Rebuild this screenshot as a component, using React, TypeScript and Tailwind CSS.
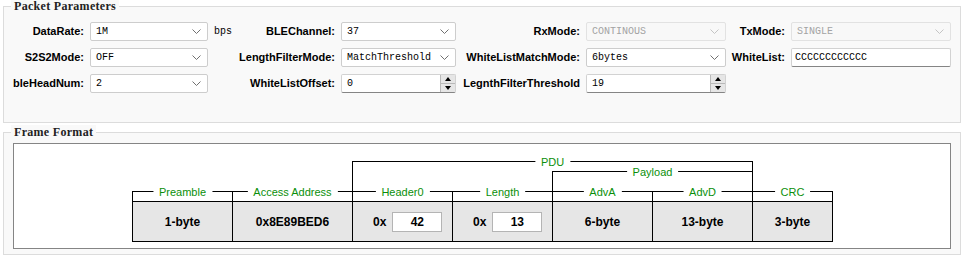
import { ReactNode } from 'react';
import clsx from 'clsx';

// small "v" arrow used by the combo boxes
function Chevron({ disabled }: { disabled?: boolean }) {
  return (
    <svg width="9" height="5" viewBox="0 0 9 5" className="shrink-0">
      <polyline
        points="0.5,0.5 4.5,4.5 8.5,0.5"
        fill="none"
        stroke={disabled ? '#c4c4c4' : '#707070'}
        strokeWidth="1"
      />
    </svg>
  );
}

function Combo({ value, disabled }: { value: string; disabled?: boolean }) {
  return (
    <div
      className={clsx(
        'flex h-[19px] items-center justify-between rounded-[2px] border pl-[5px] pr-[6px]',
        disabled ? 'border-[#e2e2e2] bg-[#f8f8f8] text-[#a3a3a3]' : 'border-[#cdcdcd] bg-white text-black'
      )}
    >
      <span className="font-['Liberation_Mono',monospace] text-[10px] leading-none">{value}</span>
      <Chevron disabled={disabled} />
    </div>
  );
}

function LineEdit({ value }: { value: string }) {
  return (
    <div className="flex h-[19px] items-center rounded-[2px] border border-[#d2d2d2] border-b-[#858585] bg-white pl-[3px]">
      <span className="font-['Liberation_Mono',monospace] text-[10px] leading-none text-black">{value}</span>
    </div>
  );
}

function SpinBox({ value }: { value: string }) {
  return (
    <div className="flex h-[19px] items-stretch rounded-[2px] border border-[#d2d2d2] border-b-[#858585] bg-white">
      <div className="flex flex-1 items-center pl-[5px]">
        <span className="font-['Liberation_Mono',monospace] text-[10px] leading-none text-black">{value}</span>
      </div>
      <div className="flex w-[15px] flex-col border-l border-[#b9b9b9] bg-[#e6e6e6]">
        <div className="flex flex-1 items-center justify-center border-b border-[#b9b9b9]">
          <div className="h-0 w-0 border-x-[3px] border-b-[4px] border-x-transparent border-b-black" />
        </div>
        <div className="flex flex-1 items-center justify-center">
          <div className="h-0 w-0 border-x-[3px] border-t-[4px] border-x-transparent border-t-black" />
        </div>
      </div>
    </div>
  );
}

function Label({ children }: { children: ReactNode }) {
  return (
    <div className="flex items-center justify-end whitespace-nowrap text-[11px] font-bold text-black">
      {children}
    </div>
  );
}

function GroupBox({ title, className, children }: { title: string; className?: string; children: ReactNode }) {
  return (
    <div className={clsx('relative mx-[3px] border border-[#dcdcdc] bg-[#f9f9f9]', className)}>
      <span className="absolute -top-[8px] left-[7px] bg-[#f9f9f9] px-[3px] font-['Liberation_Serif',serif] text-[12px] font-bold leading-[14px] tracking-[0.3px] text-[#222]">
        {title}
      </span>
      {children}
    </div>
  );
}

function FieldLabel({ children }: { children: ReactNode }) {
  return (
    <span className="absolute left-1/2 top-0 -translate-x-1/2 -translate-y-1/2 whitespace-nowrap bg-white px-[6px] text-[11px] leading-[12px] text-[#0a8f0a]">
      {children}
    </span>
  );
}

function HexCell({ value }: { value: string }) {
  return (
    <div className="flex h-full items-center pl-[20px]">
      <span className="text-[12px] font-bold">0x</span>
      <div className="ml-[6px] flex h-[20px] w-[50px] items-center justify-center border border-[#b4b4b4] bg-white text-[12px] font-bold">
        {value}
      </div>
    </div>
  );
}

export default function App() {
  return (
    <div className="min-h-[258px] w-[964px] bg-white pt-[6px] font-['Liberation_Sans',Arial,sans-serif] text-black">
      {/* Packet Parameters */}
      <GroupBox title="Packet Parameters" className="pb-[29px] pt-[15px]">
        <div className="grid grid-cols-[80px_118px_121px_115px_118px_140px_53px_160px] gap-x-[6px] gap-y-[7px] [grid-auto-rows:19px]">
          <Label>DataRate:</Label>
          <Combo value="1M" />
          <div className="flex items-center justify-between">
            <span className="font-['Liberation_Mono',monospace] text-[10px]">bps</span>
            <Label>BLEChannel:</Label>
          </div>
          <Combo value="37" />
          <Label>RxMode:</Label>
          <Combo value="CONTINOUS" disabled />
          <Label>TxMode:</Label>
          <Combo value="SINGLE" disabled />

          <Label>S2S2Mode:</Label>
          <Combo value="OFF" />
          <Label>LengthFilterMode:</Label>
          <Combo value="MatchThreshold" />
          <Label>WhiteListMatchMode:</Label>
          <Combo value="6bytes" />
          <Label>WhiteList:</Label>
          <LineEdit value="CCCCCCCCCCCC" />

          <Label>bleHeadNum:</Label>
          <Combo value="2" />
          <Label>WhiteListOffset:</Label>
          <SpinBox value="0" />
          <Label>LegnthFilterThreshold</Label>
          <SpinBox value="19" />
          <div />
          <div />
        </div>
      </GroupBox>

      {/* Frame Format */}
      <GroupBox title="Frame Format" className="mt-[9px] px-[9px] pb-[5px] pt-[10px]">
        <div className="h-[106px] border border-[#858585] bg-white pl-[118px] pt-[17px]">
          <div className="relative w-[701px]">
            {/* PDU / Payload brackets */}
            <div className="absolute left-[220px] top-0 h-[30px] w-[401px] border-x border-t border-black">
              <FieldLabel>PDU</FieldLabel>
            </div>
            <div className="absolute left-[420px] top-[10px] h-[20px] w-[201px] border-x border-t border-black">
              <FieldLabel>Payload</FieldLabel>
            </div>
            <div className="h-[30px]" />

            {/* field brackets */}
            <div className="flex h-[10px]">
              <div className="relative w-[100px] border-l border-t border-black"><FieldLabel>Preamble</FieldLabel></div>
              <div className="relative w-[120px] border-l border-t border-black"><FieldLabel>Access Address</FieldLabel></div>
              <div className="relative w-[100px] border-l border-t border-black"><FieldLabel>Header0</FieldLabel></div>
              <div className="relative w-[100px] border-l border-t border-black"><FieldLabel>Length</FieldLabel></div>
              <div className="relative w-[100px] border-l border-t border-black"><FieldLabel>AdvA</FieldLabel></div>
              <div className="relative w-[100px] border-l border-t border-black"><FieldLabel>AdvD</FieldLabel></div>
              <div className="relative w-[81px] border-x border-t border-black"><FieldLabel>CRC</FieldLabel></div>
            </div>

            {/* field values */}
            <div className="flex h-[41px] bg-[#e6e6e6] text-[12px] font-bold">
              <div className="flex w-[100px] items-center justify-center border-y border-l border-black">1-byte</div>
              <div className="flex w-[120px] items-center justify-center border-y border-l border-black">0x8E89BED6</div>
              <div className="w-[100px] border-y border-l border-black"><HexCell value="42" /></div>
              <div className="w-[100px] border-y border-l border-black"><HexCell value="13" /></div>
              <div className="flex w-[100px] items-center justify-center border-y border-l border-black">6-byte</div>
              <div className="flex w-[100px] items-center justify-center border-y border-l border-black">13-byte</div>
              <div className="flex w-[81px] items-center justify-center border border-black">3-byte</div>
            </div>
          </div>
        </div>
      </GroupBox>
    </div>
  );
}
